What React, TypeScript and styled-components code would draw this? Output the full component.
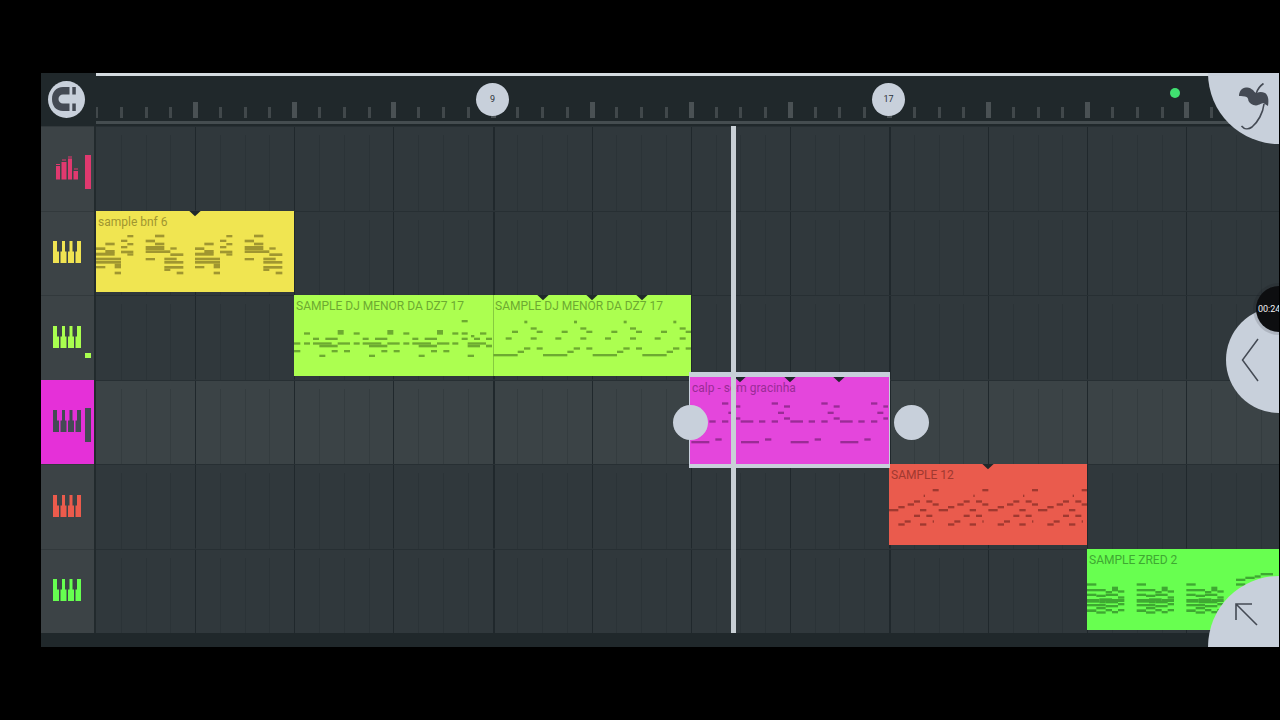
import React from "react";
import styled, { createGlobalStyle } from "styled-components";

/* Horizontal zoom of the playlist: 32 beats take up 793 pixels. */
const beatX = (beat: number) => Math.round((beat * 793) / 32);
const BEATS_DRAWN = 120;

const colors = {
  ink: "#20282b",
  lane: "#30383c",
  laneActive: "#3b4346",
  head: "#3c4346",
  pale: "#c8d0db",
  glyph: "#444a54",
};

const GlobalStyle = createGlobalStyle`
  * { box-sizing: border-box; }
  html, body { margin: 0; background: #000; }
  button { border: 0; padding: 0; font: inherit; color: inherit; cursor: pointer; }
`;

const Page = styled.div`
  min-height: 100vh;
  display: flex;
  padding: 73px 1px 73px 41px;
  background: #000;
  font-family: Roboto, "Liberation Sans", sans-serif;
`;

const Playlist = styled.main`
  position: relative;
  flex: 1;
  min-width: 0;
  display: flex;
  flex-direction: column;
  overflow: hidden;
  background: ${colors.ink};
`;

const TopBar = styled.header`
  display: flex;
  height: 53px;
`;

const Corner = styled.div`
  flex: none;
  width: 55px;
  padding: 8px 7px;
`;

const MagnetButton = styled.button`
  display: block;
  width: 37px;
  height: 37px;
  border-radius: 50%;
  background: ${colors.pale};
`;

const Ruler = styled.div`
  position: relative;
  flex: 1;
  min-width: 0;
  overflow: hidden;
  border-top: 3px solid #d3dadf;
`;

const Drawing = styled.svg`
  display: block;
  width: 100%;
  height: 100%;
`;

const BarBadge = styled.span<{ $beat: number }>`
  position: absolute;
  top: 7px;
  left: ${(p) => beatX(p.$beat) - 17}px;
  width: 33px;
  height: 33px;
  border-radius: 50%;
  background: ${colors.pale};
  color: #2c3238;
  font-size: 9px;
  line-height: 32px;
  text-align: center;
`;

const StatusDot = styled.i`
  position: absolute;
  top: 12px;
  right: 99px;
  width: 10px;
  height: 10px;
  border-radius: 50%;
  background: #40e070;
`;

const Body = styled.div`
  flex: 1;
  display: flex;
`;

const Heads = styled.div`
  flex: none;
  width: 55px;
  display: grid;
  grid-template-rows: repeat(6, 1fr);
  border-right: 2px solid #222a2d;
`;

const TrackHead = styled.button<{ $color: string; $active?: boolean }>`
  display: flex;
  align-items: center;
  gap: 3px;
  padding: 0 0 2px 11px;
  color: ${(p) => (p.$active ? colors.glyph : p.$color)};
  background: ${(p) => (p.$active ? "#e530d8" : colors.head)};
  border-top: 1px solid ${(p) => (p.$active ? "#e530d8" : "#32393c")};
`;

const Level = styled.i<{ $height: number }>`
  align-self: flex-end;
  width: 6px;
  height: ${(p) => p.$height}px;
  margin-bottom: 20px;
  background: currentColor;
`;

const Lanes = styled.div`
  position: relative;
  flex: 1;
  min-width: 0;
  display: grid;
  grid-template-rows: repeat(6, 1fr);
`;

const Lane = styled.div<{ $active?: boolean }>`
  position: relative;
  background: ${(p) => (p.$active ? colors.laneActive : colors.lane)};
  border-top: 1px solid #272f33;
`;

const LaneLines = styled(Drawing)`
  position: absolute;
  inset: 0;
`;

const ClipBox = styled.article<{
  $start: number;
  $end: number;
  $color: string;
  $ink: string;
  $selected?: boolean;
  $joined?: boolean;
}>`
  position: absolute;
  left: ${(p) => beatX(p.$start) - (p.$selected ? 2 : 0)}px;
  top: ${(p) => (p.$selected ? -9 : -1)}px;
  z-index: ${(p) => (p.$selected ? 1 : 0)};
  width: ${(p) => beatX(p.$end) - beatX(p.$start) + (p.$selected ? 3 : 0)}px;
  height: ${(p) => (p.$selected ? 96 : 81)}px;
  border: solid ${colors.pale};
  border-width: ${(p) => (p.$selected ? "5px 1px 4px" : "0")};
  background: ${(p) => p.$color};
  box-shadow: ${(p) => (p.$joined ? "inset 1px 0 #86cb40" : "none")};
  color: ${(p) => p.$ink};
`;

const ClipTitle = styled.h3`
  margin: 0;
  padding: 3px 2px;
  font-size: 12px;
  line-height: 17px;
  font-weight: 400;
  white-space: nowrap;
`;

const ClipNotes = styled.svg`
  position: absolute;
  top: 0;
  left: 0;
  width: 198px;
  height: 81px;
`;

const Handle = styled.button<{ $x: number }>`
  position: absolute;
  z-index: 2;
  top: 24px;
  left: ${(p) => p.$x}px;
  width: 35px;
  height: 35px;
  border-radius: 50%;
  background: ${colors.pale};
`;

const Playhead = styled.div`
  position: absolute;
  z-index: 2;
  top: 0;
  bottom: 0;
  left: 635px;
  width: 5px;
  background: #c9d0d6;
`;

const Footer = styled.footer`
  height: 14px;
`;

const CornerButton = styled.button<{ $edge: "top" | "bottom" }>`
  position: absolute;
  z-index: 4;
  right: 0;
  ${(p) => p.$edge}: 0;
  width: 71px;
  height: 71px;
  border-radius: ${(p) => (p.$edge === "top" ? "0 0 0 71px" : "71px 0 0 0")};
  background: ${colors.pale};
`;

const DrawerButton = styled.button`
  position: absolute;
  z-index: 3;
  right: 0;
  top: 50%;
  width: 53px;
  height: 106px;
  margin-top: -53px;
  border-radius: 53px 0 0 53px;
  background: ${colors.pale};
`;

const Timer = styled.time`
  position: absolute;
  z-index: 4;
  right: -23px;
  top: 213px;
  width: 46px;
  height: 46px;
  padding-left: 2px;
  border-radius: 50%;
  background: #0d0e10;
  box-shadow: 0 0 0 3px rgba(20, 24, 30, 0.14);
  color: #f2f2f2;
  font-size: 9px;
  line-height: 47px;
`;

/* Notes are [x, y, width, height] in thirds of a pixel from the clip's corner. */
type Note = [number, number, number, number];

const repeat = (notes: Note[], step: number, times: number): Note[] =>
  Array.from({ length: times }, (_, i) =>
    notes.map(([x, y, w, h]): Note => [x + i * step, y, w, h])
  ).flat();

const bnf: Note[] = repeat(
  [
    [28, 95, 28, 8], [0, 109, 28, 8], [28, 117, 28, 9], [0, 125, 56, 9],
    [0, 140, 75, 8], [0, 150, 75, 8], [56, 158, 19, 14], [0, 165, 28, 7], [56, 182, 19, 8],
    [94, 72, 18, 7], [75, 86, 19, 7], [94, 96, 18, 7], [75, 105, 19, 7], [75, 119, 37, 8], [94, 127, 18, 7],
    [177, 71, 28, 8], [149, 86, 28, 8], [177, 95, 28, 8], [149, 105, 56, 12], [149, 118, 74, 8],
    [223, 109, 19, 7], [223, 127, 39, 8], [149, 141, 28, 7], [205, 140, 37, 8], [205, 150, 57, 8],
    [205, 165, 57, 8], [205, 173, 18, 7], [242, 182, 20, 8],
  ],
  297,
  2
);

const dz7: Note[] = [
  [0, 142, 19, 7], [0, 165, 19, 7],
  ...repeat(
    [
      [30, 112, 18, 7], [30, 142, 18, 7], [57, 128, 18, 7], [57, 142, 56, 7], [76, 149, 55, 8],
      [76, 179, 18, 7], [94, 128, 37, 7], [113, 165, 18, 7], [131, 105, 18, 14], [131, 142, 37, 7],
      [150, 165, 18, 7],
    ],
    149,
    3
  ),
  [475, 112, 18, 7], [475, 142, 18, 7], [503, 75, 18, 7], [503, 112, 18, 7], [503, 128, 18, 7],
  [531, 120, 10, 7], [540, 128, 18, 7], [521, 142, 55, 7], [521, 149, 37, 8], [521, 179, 19, 7],
  [558, 112, 19, 7], [576, 128, 18, 7], [576, 149, 18, 8],
];

const dz7b: Note[] = repeat(
  [
    [1, 177, 73, 7], [74, 167, 19, 7], [93, 157, 19, 7], [131, 157, 18, 7], [38, 127, 18, 7],
    [57, 107, 18, 7], [94, 77, 9, 8], [113, 97, 18, 7], [131, 107, 18, 7], [113, 127, 18, 7],
  ],
  149,
  4
);

const calp: Note[] = repeat(
  [
    [4, 192, 54, 7], [76, 184, 19, 7], [96, 76, 19, 7], [3, 130, 38, 7], [58, 130, 19, 7],
    [96, 130, 19, 7], [115, 104, 18, 7], [133, 85, 18, 7], [133, 121, 18, 7],
  ],
  149,
  4
);

const sample12: Note[] = repeat(
  [
    [0, 135, 28, 7], [28, 126, 19, 7], [56, 118, 19, 7], [75, 109, 18, 7], [104, 92, 4, 7],
    [131, 75, 18, 7], [112, 109, 18, 7], [131, 118, 18, 7], [93, 135, 19, 7], [75, 152, 18, 7],
    [112, 152, 18, 7], [47, 169, 18, 7], [28, 178, 19, 7], [93, 178, 19, 7], [131, 169, 4, 7],
  ],
  149,
  4
);

const zred: Note[] = [
  ...repeat(
    [
      [0, 103, 28, 7], [0, 120, 56, 7], [75, 113, 18, 7], [56, 126, 19, 7], [75, 120, 18, 7],
      [93, 124, 19, 7], [0, 134, 28, 7], [28, 137, 28, 7], [56, 134, 37, 7], [93, 142, 19, 7],
      [0, 150, 37, 11], [37, 148, 38, 9], [56, 156, 37, 7], [75, 150, 37, 9], [0, 165, 56, 7],
      [37, 156, 19, 7], [56, 168, 37, 7], [93, 162, 19, 7], [0, 181, 28, 8], [28, 174, 28, 7],
      [28, 187, 28, 7], [56, 180, 19, 7], [75, 186, 18, 7], [93, 180, 19, 7],
    ],
    149,
    3
  ),
  [447, 89, 28, 7], [447, 103, 28, 7], [475, 83, 28, 7], [503, 79, 18, 7], [521, 72, 37, 7],
];

type ClipData = {
  title: string;
  start: number;
  end: number;
  color: string;
  ink: string;
  marks: number[];
  notes: Note[];
  selected?: boolean;
  joined?: boolean;
};

type Track = {
  name: string;
  color: string;
  icon: "mixer" | "keys";
  level?: number;
  active?: boolean;
  clips: ClipData[];
};

const tracks: Track[] = [
  { name: "Drums", color: "#e0396f", icon: "mixer", level: 34, clips: [] },
  {
    name: "Sample bnf",
    color: "#f0e352",
    icon: "keys",
    clips: [{ title: "sample bnf 6", start: 0, end: 8, color: "#f0e551", ink: "#a09630", marks: [99], notes: bnf }],
  },
  {
    name: "Sample DZ7",
    color: "#a9ff4f",
    icon: "keys",
    level: 5,
    clips: [
      { title: "SAMPLE DJ MENOR DA DZ7 17", start: 8, end: 16, color: "#acff50", ink: "#6daa31", marks: [], notes: dz7 },
      { title: "SAMPLE DJ MENOR DA DZ7 17", start: 16, end: 24, color: "#acff50", ink: "#6daa31", marks: [50, 99, 149], notes: dz7b, joined: true },
    ],
  },
  {
    name: "Calp",
    color: "#e530d8",
    icon: "keys",
    level: 34,
    active: true,
    clips: [
      { title: "calp - sem gracinha", start: 24, end: 32, color: "#e446dc", ink: "#9a2c96", marks: [50, 100, 149], notes: calp, selected: true },
    ],
  },
  {
    name: "Sample 12",
    color: "#ec5b4c",
    icon: "keys",
    clips: [{ title: "SAMPLE 12", start: 32, end: 40, color: "#ea5b4d", ink: "#a03930", marks: [99], notes: sample12 }],
  },
  {
    name: "Sample ZRED",
    color: "#66ff50",
    icon: "keys",
    clips: [{ title: "SAMPLE ZRED 2", start: 40, end: 48, color: "#68ff50", ink: "#3fa832", marks: [], notes: zred }],
  },
];

const beats = Array.from({ length: BEATS_DRAWN }, (_, i) => i);

const KeysIcon = () => (
  <svg width="30" height="24" viewBox="0 0 30 24" fill="currentColor" aria-hidden="true">
    <path d="M1 1h4v10.500h2v11.500H1zM10 1h3v10.500h1.500v11.500H8.500V11.500H10zM17.500 1h3v10.500H22v11.500h-6V11.500h1.500zM25 1h4v22h-5.500V11.500H25z" />
  </svg>
);

const MixerIcon = () => (
  <svg width="30" height="26" viewBox="0 0 30 26" fill="currentColor" aria-hidden="true">
    <path d="M4 11h4v13.500H4zM9.500 7h5v17.500h-5zM16 3.500h4v21h-4zM21.500 16h4.500v8.500h-4.500zM4 9h4v1H4zM10 4.500h4v1h-4zM16 1.500h4v1h-4zM22 13.500h4v1h-4z" />
  </svg>
);

const MagnetIcon = () => (
  <svg width="37" height="37" viewBox="0 0 37 37" fill={colors.glyph} aria-hidden="true">
    <path d="M21.500 6v7.500H15a4.500 4.500 0 0 0 0 9h6.500V30H15C8 30 4 25 4 18S8 6 15 6zM24.300 6h3.500v7.500h-3.500zM24.300 22.500h3.500V30h-3.500z" />
  </svg>
);

const FruitIcon = () => (
  <svg width="71" height="71" viewBox="0 0 71 71" aria-hidden="true">
    <path
      d="M31 23c0-5 3-8 7-8.500 3-.5 5 1 7 2.500 1 1.500 2 3 4 3 2-1.500 5-1.500 8 0 3 2 4 6 3 13l-4-2.500c-2-1-3 1-8 2-4-.5-6-2-7.500-4.500-.5-3-1-4-3.500-4.500-2.500-.7-4-.7-6-.5z"
      fill={colors.glyph}
    />
    <path
      d="M48.500 20c1-4 3.500-7 7-9.500M56 31c-1 9-6 18-12 23-4 3-8 2-10.500-1"
      fill="none"
      stroke={colors.glyph}
      strokeWidth="1.600"
    />
  </svg>
);

const ArrowIcon = () => (
  <svg width="71" height="71" viewBox="0 0 71 71" fill="none" stroke={colors.glyph} strokeWidth="1.600" aria-hidden="true">
    <path d="M28 44V28h16M28 28l21 21" />
  </svg>
);

const ChevronIcon = () => (
  <svg width="53" height="106" viewBox="0 0 53 106" fill="none" stroke={colors.glyph} strokeWidth="1.500" aria-hidden="true">
    <path d="M32 32L16.500 53l15.500 21" />
  </svg>
);

const RulerTicks = () => (
  <Drawing aria-hidden="true">
    {beats.map((b) =>
      b % 4 === 0 && b > 0 ? (
        <rect key={b} x={beatX(b) - 2} y="26" width="5" height="16" fill="#4a5154" />
      ) : (
        <rect key={b} x={beatX(b) - 1} y="31" width="3" height="11" fill="#41484b" />
      )
    )}
    <rect y="45" width="100%" height="3" fill="#454d50" />
  </Drawing>
);

const Clip = ({ clip }: { clip: ClipData }) => (
  <ClipBox
    $start={clip.start}
    $end={clip.end}
    $color={clip.color}
    $ink={clip.ink}
    $selected={clip.selected}
    $joined={clip.joined}
  >
    <ClipTitle>{clip.title}</ClipTitle>
    <ClipNotes viewBox="0 0 594 243" aria-hidden="true">
      {clip.notes.map(([x, y, w, h], i) => (
        <rect key={i} x={x} y={y} width={w} height={h} fill="currentColor" />
      ))}
      {clip.marks.map((m) => (
        <path key={m} d={`M${m * 3 - 17} 0h34l-17 16z`} fill={colors.ink} />
      ))}
    </ClipNotes>
  </ClipBox>
);

export default function App() {
  return (
    <Page>
      <GlobalStyle />
      <Playlist>
        <TopBar>
          <Corner>
            <MagnetButton aria-label="Snap to grid">
              <MagnetIcon />
            </MagnetButton>
          </Corner>
          <Ruler>
            <RulerTicks />
            <BarBadge $beat={16}>9</BarBadge>
            <BarBadge $beat={32}>17</BarBadge>
            <StatusDot />
          </Ruler>
        </TopBar>
        <Body>
          <Heads>
            {tracks.map((t) => (
              <TrackHead key={t.name} $color={t.color} $active={t.active} aria-label={t.name}>
                {t.icon === "mixer" ? <MixerIcon /> : <KeysIcon />}
                {t.level && <Level $height={t.level} />}
              </TrackHead>
            ))}
          </Heads>
          <Lanes>
            {tracks.map((t) => (
              <Lane key={t.name} $active={t.active}>
                <LaneLines aria-hidden="true">
                  {beats.slice(1).map((b) => (
                    <rect
                      key={b}
                      x={beatX(b)}
                      y={b % 4 ? 8 : 0}
                      width={b % 16 ? 1 : 2}
                      height="100%"
                      fill={b % 4 ? (t.active ? "#343c3f" : "#2b3337") : "#20282c"}
                    />
                  ))}
                </LaneLines>
                {t.clips.map((c) => (
                  <Clip key={c.start} clip={c} />
                ))}
                {t.active && (
                  <>
                    <Handle $x={577} aria-label="Clip start" />
                    <Handle $x={798} aria-label="Clip end" />
                  </>
                )}
              </Lane>
            ))}
            <Playhead />
          </Lanes>
        </Body>
        <Footer />
        <CornerButton $edge="top" aria-label="Main menu">
          <FruitIcon />
        </CornerButton>
        <DrawerButton aria-label="Open drawer">
          <ChevronIcon />
        </DrawerButton>
        <Timer>00:24</Timer>
        <CornerButton $edge="bottom" aria-label="Expand">
          <ArrowIcon />
        </CornerButton>
      </Playlist>
    </Page>
  );
}
